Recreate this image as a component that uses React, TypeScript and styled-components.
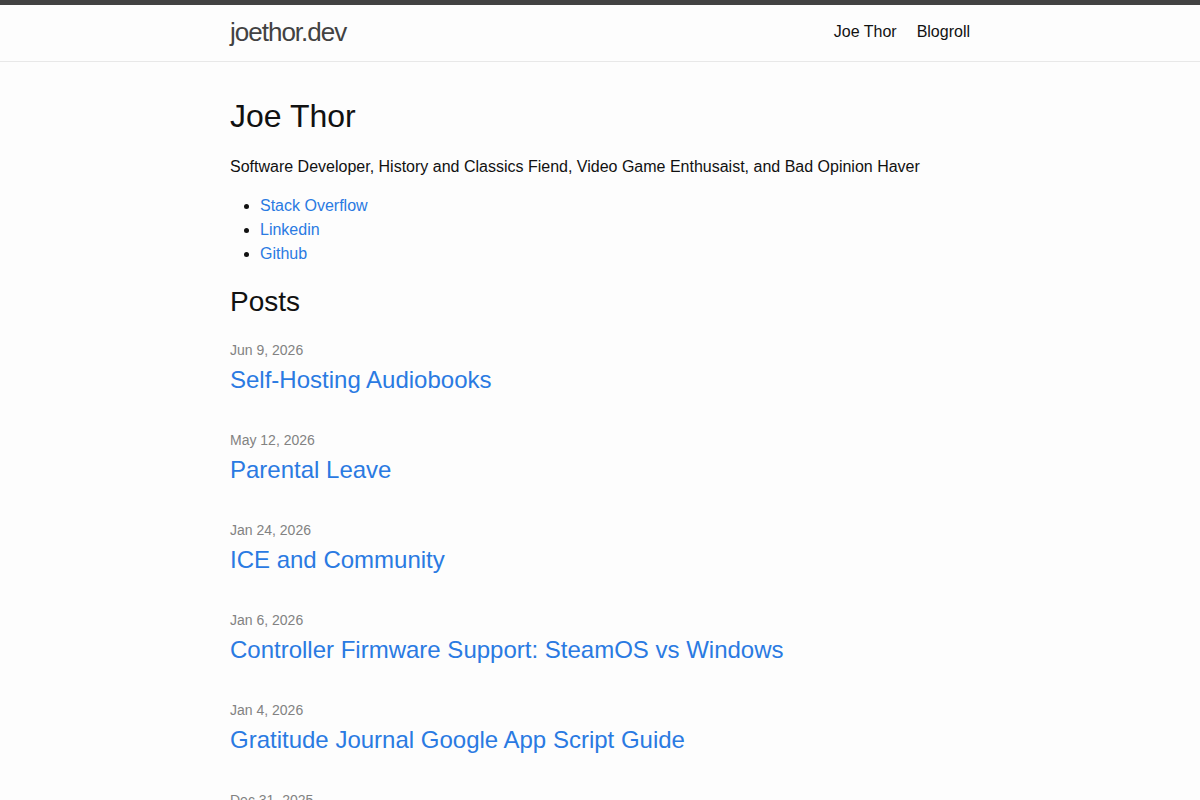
import React from "react";
import styled, { createGlobalStyle } from "styled-components";

const Global = createGlobalStyle`
  html, body { margin: 0; padding: 0; }
  body {
    background: #fdfdfd;
    color: #111111;
    font: 400 16px/1.5 "Liberation Sans", Arial, sans-serif;
  }
  a { color: #2a7ae2; text-decoration: none; }
`;

const Header = styled.header`
  border-top: 5px solid #424242;
  border-bottom: 1px solid #e8e8e8;
  min-height: 56px;
`;

const Wrapper = styled.div`
  max-width: 740px;
  margin: 0 auto;
  padding: 0 30px;
`;

const HeaderInner = styled(Wrapper)`
  display: flex;
  justify-content: space-between;
  align-items: flex-start;
  height: 56px;
`;

const SiteTitle = styled.a`
  font-size: 26px;
  font-weight: 300;
  letter-spacing: -1px;
  line-height: 54px;
  color: #424242;
`;

const Nav = styled.nav`
  display: flex;
  gap: 20px;
  line-height: 54px;
`;

const NavLink = styled.a`
  color: #111111;
`;

const Main = styled(Wrapper)`
  padding-top: 30px;
  padding-bottom: 30px;
`;

const H1 = styled.h1`
  font-size: 32px;
  font-weight: 400;
  line-height: 48px;
  margin: 0 0 15px;
`;

const P = styled.p`
  margin: 0 0 15px;
`;

const Links = styled.ul`
  margin: 0 0 15px 30px;
  padding: 0;
`;

const H2 = styled.h2`
  font-size: 28px;
  font-weight: 400;
  line-height: 42px;
  margin: 0 0 15px;
`;

const PostList = styled.ul`
  list-style: none;
  margin: 0;
  padding: 0;
`;

const PostItem = styled.li`
  margin-bottom: 30px;
`;

const Meta = styled.span`
  font-size: 14px;
  color: #828282;
`;

const PostTitle = styled.h3`
  margin: 0;
  font-size: 24px;
  font-weight: 400;
  line-height: 36px;
`;

const posts = [
  ["Jun 9, 2026", "Self-Hosting Audiobooks"],
  ["May 12, 2026", "Parental Leave"],
  ["Jan 24, 2026", "ICE and Community"],
  ["Jan 6, 2026", "Controller Firmware Support: SteamOS vs Windows"],
  ["Jan 4, 2026", "Gratitude Journal Google App Script Guide"],
  ["Dec 31, 2025", "Year in Review 2025"],
];

export default function App() {
  return (
    <>
      <Global />
      <Header>
        <HeaderInner>
          <SiteTitle href="#">joethor.dev</SiteTitle>
          <Nav>
            <NavLink href="#">Joe Thor</NavLink>
            <NavLink href="#">Blogroll</NavLink>
          </Nav>
        </HeaderInner>
      </Header>
      <Main>
        <H1>Joe Thor</H1>
        <P>
          Software Developer, History and Classics Fiend, Video Game Enthusaist,
          and Bad Opinion Haver
        </P>
        <Links>
          <li><a href="#">Stack Overflow</a></li>
          <li><a href="#">Linkedin</a></li>
          <li><a href="#">Github</a></li>
        </Links>
        <H2>Posts</H2>
        <PostList>
          {posts.map(([d, t]) => (
            <PostItem key={t}>
              <Meta>{d}</Meta>
              <PostTitle>
                <a href="#">{t}</a>
              </PostTitle>
            </PostItem>
          ))}
        </PostList>
      </Main>
    </>
  );
}
